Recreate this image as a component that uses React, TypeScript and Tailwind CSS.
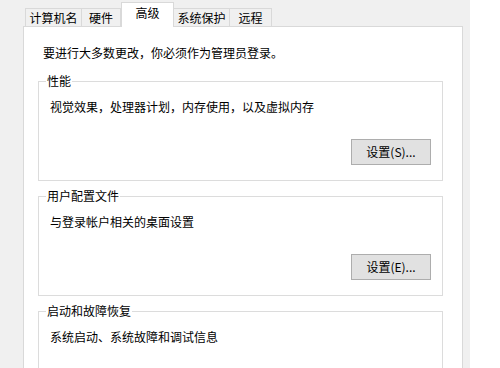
import React from 'react'

const tabs = [
    { label: '计算机名', width: 'w-[57px]' },
    { label: '硬件', width: 'w-[40px]' },
    { label: '高级', width: 'w-[53px]', active: true },
    { label: '系统保护', width: 'w-[57px]' },
    { label: '远程', width: 'w-[43px]' },
]

const GroupBox = ({
    title,
    text,
    button,
    last,
}: {
    title: string
    text: string
    button?: string
    last?: boolean
}) => (
    <fieldset className={`border border-[#dcdcdc] ${last ? 'pb-[40px]' : 'pb-[15px] mb-[7px]'}`}>
        <legend className="ml-[7px] px-px leading-4">{title}</legend>
        <div className="pt-[10px] pl-[11px] leading-4">{text}</div>
        {button && (
            <div className="flex justify-end mt-[24px] pr-[11px]">
                <button className="w-[80px] h-[26px] bg-[#e1e1e1] border border-[#adadad] leading-4">
                    {button}
                </button>
            </div>
        )}
    </fieldset>
)

export default function App() {
    return (
        <div
            className="flex w-[500px] h-[368px] overflow-hidden bg-white text-[12px] text-black"
            style={{ fontFamily: '"Noto Sans CJK SC", "Noto Sans", sans-serif' }}
        >
            <div className="w-[470px] h-full bg-[#f0f0f0] pl-[23px] pr-[7px] pt-[2px]">
                {/* TABS */}
                <div className="flex items-end pl-[2px] h-[24px]">
                    {tabs.map((tab) =>
                        tab.active ? (
                            <div
                                key={tab.label}
                                className={`${tab.width} relative z-10 h-[25px] -mb-px bg-white border border-b-0 border-[#d9d9d9] flex justify-center pt-[2px] leading-4`}
                            >
                                {tab.label}
                            </div>
                        ) : (
                            <div
                                key={tab.label}
                                className={`${tab.width} h-[18px] bg-[#f0f0f0] border border-b-0 border-[#d9d9d9] -ml-px first:ml-0 flex justify-center items-center leading-4`}
                            >
                                {tab.label}
                            </div>
                        )
                    )}
                </div>

                {/* PANEL */}
                <div className="bg-white border border-[#d9d9d9] h-[400px] pt-[18px] pl-[14px] pr-[19px]">
                    <div className="pl-[5px] leading-4">要进行大多数更改，你必须作为管理员登录。</div>
                    <div className="mt-[12px]">
                        <GroupBox
                            title="性能"
                            text="视觉效果，处理器计划，内存使用，以及虚拟内存"
                            button="设置(S)..."
                        />
                        <GroupBox title="用户配置文件" text="与登录帐户相关的桌面设置" button="设置(E)..." />
                        <GroupBox title="启动和故障恢复" text="系统启动、系统故障和调试信息" last />
                    </div>
                </div>
            </div>
        </div>
    )
}
